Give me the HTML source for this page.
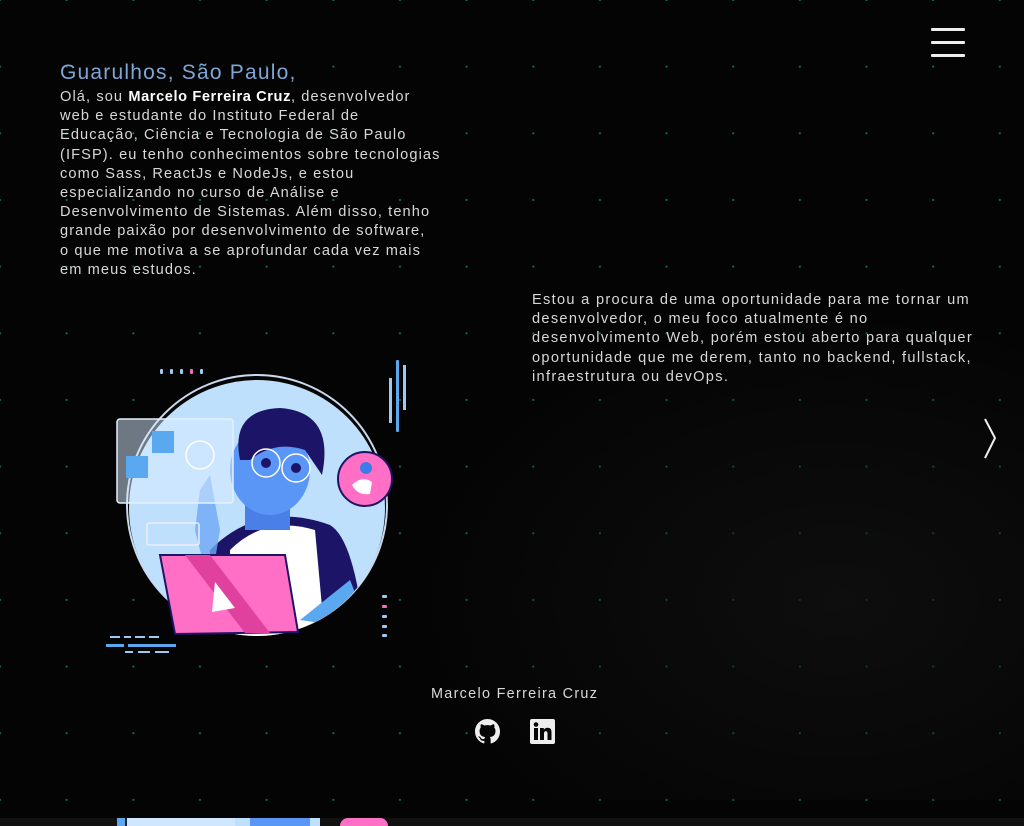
<!DOCTYPE html>
<html><head><meta charset="utf-8"><style>
html,body{margin:0;padding:0}
body{width:1024px;height:826px;overflow:hidden;background:#050505;position:relative;font-family:"Liberation Sans",sans-serif;color:#d8d8d8}
.grid{position:absolute;left:0;top:0;width:1024px;height:818px;background-image:radial-gradient(circle at 1px 1px,#0d7366 0.9px,transparent 1.2px);background-size:66.67px 66.67px;background-position:-1px -1px;background-color:#040404}
.glow{position:absolute;left:400px;top:300px;width:624px;height:500px;background:radial-gradient(ellipse at 70% 60%,rgba(18,18,18,.7),transparent 70%)}
.t{position:absolute;white-space:nowrap;font-size:14.6px;line-height:19.2px;letter-spacing:1.1px}
h1{position:absolute;left:60px;top:61px;margin:0;font-weight:normal;font-size:21px;letter-spacing:1.2px;color:#7ea6d6}
.ham{position:absolute;left:931px;width:34px;height:3px;background:#eee;border-radius:1px}
.bottom{position:absolute;left:0;top:818px;width:1024px;height:8px;background:#111;overflow:hidden}
</style></head><body>
<div class="grid"></div><div class="glow"></div>
<div class="ham" style="top:28px"></div><div class="ham" style="top:41px"></div><div class="ham" style="top:54px"></div>
<h1>Guarulhos, São Paulo,</h1>
<div class="t" style="left:60px;top:88px">Olá, sou <b style="color:#fff;letter-spacing:0.6px">Marcelo Ferreira Cruz</b>, desenvolvedor<br>web e estudante do Instituto Federal de<br>Educação, Ciência e Tecnologia de São Paulo<br>(IFSP). eu tenho conhecimentos sobre tecnologias<br>como Sass, ReactJs e NodeJs, e estou<br>especializando no curso de Análise e<br>Desenvolvimento de Sistemas. Além disso, tenho<br>grande paixão por desenvolvimento de software,<br>o que me motiva a se aprofundar cada vez mais<br>em meus estudos.</div>
<div class="t" style="left:532px;top:291px;letter-spacing:1.3px">Estou a procura de uma oportunidade para me tornar um<br>desenvolvedor, o meu foco atualmente é no<br>desenvolvimento Web, porém estou aberto para qualquer<br>oportunidade que me derem, tanto no backend, fullstack,<br>infraestrutura ou devOps.</div>
<svg style="position:absolute;left:980px;top:416px" width="20" height="46"><path d="M5 3 L15 22 L5 42" stroke="#eee" stroke-width="2" fill="none"/></svg>
<svg style="position:absolute;left:100px;top:350px" width="320" height="310" viewBox="0 0 320 310">
<g fill="#9ccaf2"><rect x="60" y="19" width="3" height="5" rx="1"/><rect x="70" y="19" width="3" height="5" rx="1"/><rect x="80" y="19" width="3" height="5" rx="1"/><rect x="100" y="19" width="3" height="5" rx="1"/></g>
<rect x="90" y="19" width="3" height="5" rx="1" fill="#f06fb8"/>
<rect x="296" y="10" width="3" height="72" rx="1" fill="#5aa8f0"/><rect x="289" y="28" width="3" height="45" fill="#9ccaf2"/><rect x="303" y="15" width="3" height="45" fill="#9ccaf2"/>
<circle cx="157" cy="155" r="130" fill="none" stroke="#c9d9ee" stroke-width="2"/>
<circle cx="157" cy="158" r="128" fill="#bfe0fc"/>
<clipPath id="c"><circle cx="157" cy="158" r="128"/></clipPath>
<g clip-path="url(#c)">
<path d="M110 200 Q160 150 230 175 Q255 190 265 290 L110 300Z" fill="#1c1466"/>
<path d="M130 200 Q165 165 215 180 L225 290 L130 290Z" fill="#fff"/>
<rect x="145" y="140" width="45" height="40" fill="#4a7fe8"/>
<ellipse cx="170" cy="120" rx="40" ry="45" fill="#5a96f5"/>
<path d="M140 110 Q130 60 180 58 Q235 62 222 125 L205 100 Q175 90 150 110Z" fill="#1c1466"/>
<circle cx="166" cy="113" r="14" fill="none" stroke="#fff" stroke-width="1.5"/><circle cx="196" cy="118" r="14" fill="none" stroke="#fff" stroke-width="1.5"/>
<circle cx="166" cy="113" r="5" fill="#1c1466"/><circle cx="196" cy="118" r="5" fill="#1c1466"/>
<path d="M200 270 L250 230 L270 280Z" fill="#5aa8f0"/>
<path d="M95 180 L100 140 L110 125 L120 180 L110 240Z" fill="#6fa8f5" opacity=".8"/>
</g>
<rect x="17" y="69" width="116" height="84" rx="3" fill="#d8ecff" fill-opacity=".5" stroke="#e6f0ff" stroke-width="1.5"/>
<rect x="26" y="106" width="22" height="22" fill="#5aa8f0"/><rect x="52" y="81" width="22" height="22" fill="#5aa8f0"/>
<circle cx="100" cy="105" r="14" fill="none" stroke="#fff" stroke-width="1.5"/>
<rect x="47" y="173" width="52" height="22" rx="2" fill="none" stroke="#eef" stroke-width="1.5"/>
<path d="M60 205 L185 205 L198 282 L75 284Z" fill="#ff6fc6" stroke="#1c1466" stroke-width="2"/>
<path d="M85 205 L110 205 L170 283 L145 283Z" fill="#e0409e"/>
<path d="M115 232 L135 258 L112 262Z" fill="#fff"/>
<circle cx="265" cy="129" r="27" fill="#ff6fc6" stroke="#1c1466" stroke-width="2"/>
<circle cx="266" cy="118" r="6" fill="#3b7de8"/><path d="M252 135 Q262 125 272 132 L270 144 Q258 146 252 135Z" fill="#fff"/>
<g fill="#9ccaf2"><rect x="282" y="245" width="5" height="3" rx="1"/><rect x="282" y="265" width="5" height="3" rx="1"/><rect x="282" y="275" width="5" height="3" rx="1"/><rect x="282" y="284" width="5" height="3" rx="1"/>
<rect x="10" y="286" width="10" height="2"/><rect x="24" y="286" width="7" height="2"/><rect x="35" y="286" width="10" height="2"/><rect x="49" y="286" width="10" height="2"/><rect x="25" y="301" width="8" height="2"/><rect x="38" y="301" width="12" height="2"/><rect x="55" y="301" width="14" height="2"/></g>
<rect x="282" y="255" width="5" height="3" rx="1" fill="#f06fb8"/>
<rect x="6" y="294" width="18" height="3" fill="#5aa8f0"/><rect x="28" y="294" width="48" height="3" fill="#5aa8f0"/>
</svg>
<div class="t" style="left:431px;top:685px;letter-spacing:1.3px;font-size:14.4px">Marcelo Ferreira Cruz</div>
<svg style="position:absolute;left:475px;top:719px" width="25" height="25" viewBox="0 0 16 16"><path fill="#eee" d="M8 0C3.580 0 0 3.58 0 8c0 3.54 2.29 6.530 5.470 7.59.4.07.55-.17.55-.38v-1.33c-2.23.48-2.7-1.07-2.7-1.070-.36-.92-.89-1.17-.89-1.17-.73-.5.05-.49.05-.49.8.06 1.23.82 1.23.82.72 1.22 1.87.87 2.33.66.07-.52.28-.87.51-1.07-1.78-.2-3.64-.89-3.64-3.95 0-.87.31-1.59.82-2.15-.08-.2-.36-1.02.08-2.12 0 0 .67-.21 2.2.82.64-.18 1.32-.27 2-.27.68 0 1.36.09 2 .27 1.53-1.04 2.2-.82 2.2-.82.44 1.1.16 1.92.08 2.12.51.56.82 1.27.82 2.15 0 3.07-1.87 3.75-3.65 3.95.29.25.54.73.54 1.48v2.2c0 .21.15.46.55.38A8.01 8.01 0 0016 8c0-4.42-3.58-8-8-8z"/></svg>
<svg style="position:absolute;left:530px;top:719px" width="25" height="25" viewBox="0 0 25 25"><rect width="25" height="25" rx="2" fill="#eee"/><rect x="4" y="9" width="4" height="12" fill="#050505"/><circle cx="6" cy="5.5" r="2.3" fill="#050505"/><path d="M10 9h3.8v1.7c.6-1.1 2-2 3.8-2 3.2 0 3.9 2 3.9 4.7V21h-4v-6.3c0-1.5-.3-2.5-1.7-2.5S14 13.3 14 14.7V21h-4z" fill="#050505"/></svg>
<div class="bottom"><div style="position:absolute;left:117px;top:0;width:12px;height:8px;background:#5aa8f0"></div><div style="position:absolute;left:125px;top:0;width:108px;height:8px;background:#cfe6ff;border-left:2px solid #222"></div><div style="position:absolute;left:235px;top:0;width:85px;height:8px;background:#bfe0fc"></div><div style="position:absolute;left:250px;top:0;width:60px;height:8px;background:#5a96f5"></div><div style="position:absolute;left:340px;top:0;width:48px;height:8px;background:#ff6fc6;border-radius:24px 24px 0 0"></div></div>
</body></html>
